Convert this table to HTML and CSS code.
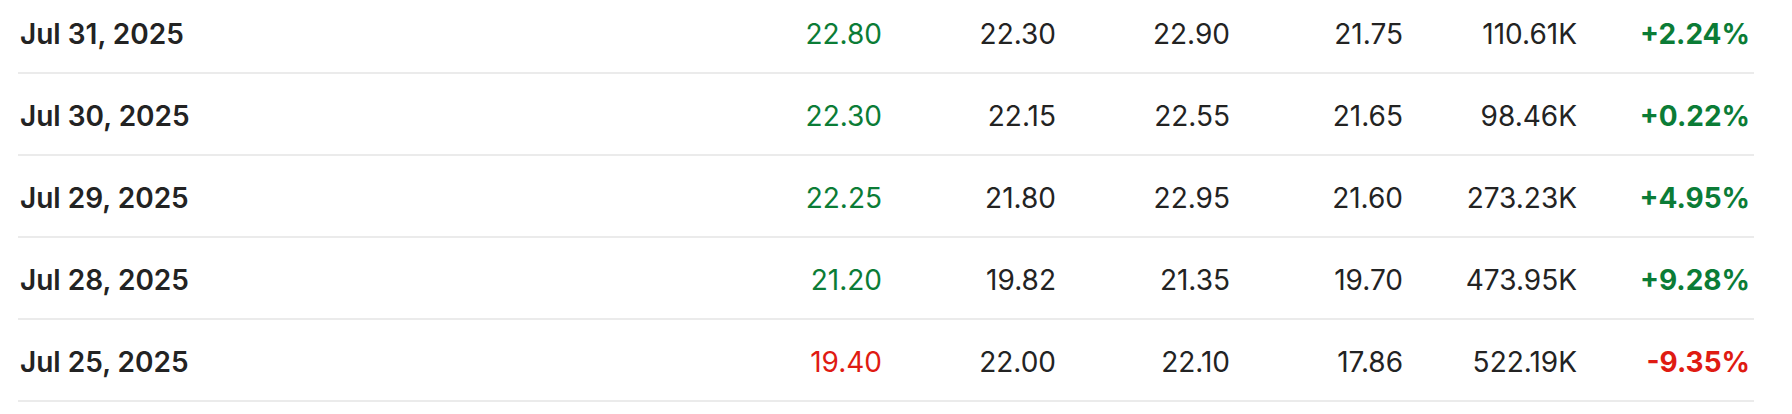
FILE: index.html
```html
<!DOCTYPE html>
<html lang="en">
<head>
<meta charset="utf-8">
<title>Historical data</title>
<link rel="stylesheet" href="styles.css">
</head>
<body>
<div class="table">
  <div class="row">
    <div class="date">Jul 31, 2025</div>
    <div class="num up">22.80</div>
    <div class="num">22.30</div>
    <div class="num">22.90</div>
    <div class="num">21.75</div>
    <div class="num">110.61K</div>
    <div class="num pct up">+2.24%</div>
  </div>
  <div class="row">
    <div class="date">Jul 30, 2025</div>
    <div class="num up">22.30</div>
    <div class="num">22.15</div>
    <div class="num">22.55</div>
    <div class="num">21.65</div>
    <div class="num">98.46K</div>
    <div class="num pct up">+0.22%</div>
  </div>
  <div class="row">
    <div class="date">Jul 29, 2025</div>
    <div class="num up">22.25</div>
    <div class="num">21.80</div>
    <div class="num">22.95</div>
    <div class="num">21.60</div>
    <div class="num">273.23K</div>
    <div class="num pct up">+4.95%</div>
  </div>
  <div class="row">
    <div class="date">Jul 28, 2025</div>
    <div class="num up">21.20</div>
    <div class="num">19.82</div>
    <div class="num">21.35</div>
    <div class="num">19.70</div>
    <div class="num">473.95K</div>
    <div class="num pct up">+9.28%</div>
  </div>
  <div class="row">
    <div class="date">Jul 25, 2025</div>
    <div class="num down">19.40</div>
    <div class="num">22.00</div>
    <div class="num">22.10</div>
    <div class="num">17.86</div>
    <div class="num">522.19K</div>
    <div class="num pct down">-9.35%</div>
  </div>
</div>
</body>
</html>
```

FILE: styles.css
```css
html, body {
  margin: 0;
  padding: 0;
  background: #ffffff;
}

body {
  font-family: Inter, "Noto Sans", "Liberation Sans", sans-serif;
  color: #232323;
  font-size: 28px;
}

.table {
  margin: -8px 38px 0 18px;
}

.row {
  box-sizing: border-box;
  display: grid;
  grid-template-columns: 1fr 170px 174px 174px 173px 174px 173px;
  align-items: center;
  height: 82px;
  border-bottom: 2px solid #ebebeb;
  padding: 4px 4px 0 2px;
}

.date {
  font-weight: 600;
}

.num {
  text-align: right;
  font-weight: 400;
}

.pct {
  font-weight: 700;
}

.up {
  color: #0b7c36;
}

.down {
  color: #df1b12;
}
```
